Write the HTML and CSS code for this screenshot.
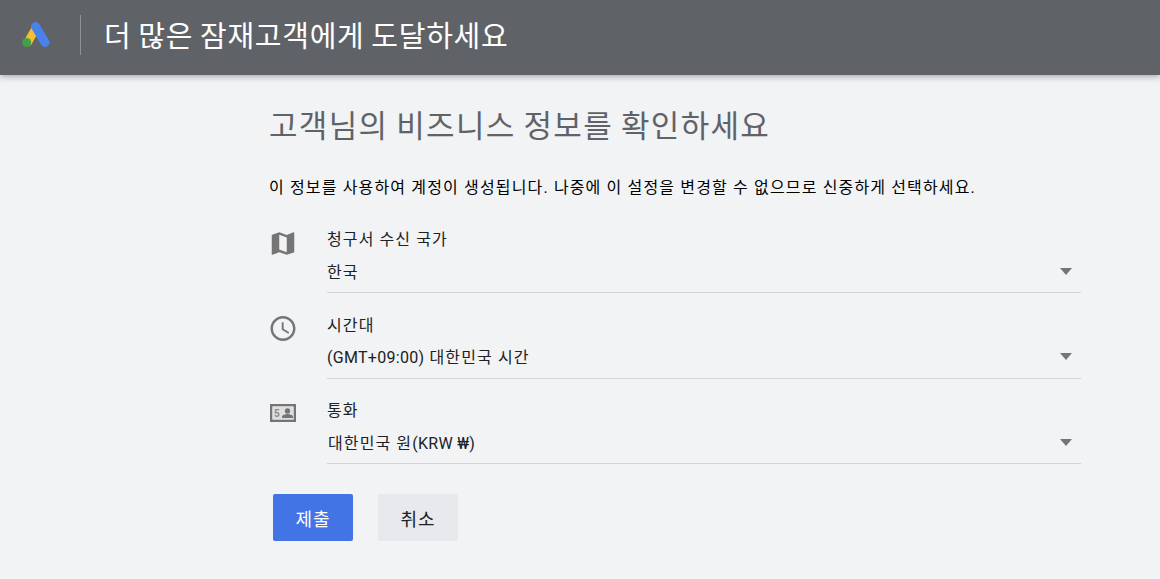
FILE: index.html
```html
<!DOCTYPE html>
<html lang="ko">
<head>
<meta charset="utf-8">
<title>Google Ads</title>
<link rel="stylesheet" href="styles.css">
</head>
<body>
<header class="topbar">
  <svg class="logo" width="28" height="26" viewBox="0 0 28 26">
    <path d="M6 20 14 6" stroke="#f4c02f" stroke-width="8.5" stroke-linecap="round" fill="none"/>
    <path d="M13.5 4.5 23 20.5" stroke="#4a82ec" stroke-width="9" stroke-linecap="round" fill="none"/>
    <circle cx="4.7" cy="20.5" r="4.5" fill="#43a047"/>
  </svg>
  <div class="divider"></div>
  <h1 class="topbar-title">더 많은 잠재고객에게 도달하세요</h1>
</header>
<main class="content">
  <h2 class="heading">고객님의 비즈니스 정보를 확인하세요</h2>
  <p class="intro">이 정보를 사용하여 계정이 생성됩니다. 나중에 이 설정을 변경할 수 없으므로 신중하게 선택하세요.</p>
  <div class="fields">
    <div class="field">
      <div class="icon-slot"><svg width="31" height="31" viewBox="0 0 24 24"><path fill="#757575" d="M20.5 3l-.16.03L15 5.1 9 3 3.36 4.9c-.21.07-.36.25-.36.48V20.5c0 .28.22.5.5.5l.16-.03L9 18.9l6 2.1 5.64-1.9c.21-.07.36-.25.36-.48V3.5c0-.28-.22-.5-.5-.5zM15 19l-6-2.11V5l6 2.11V19z"/></svg></div>
      <div class="field-body">
        <div class="label">청구서 수신 국가</div>
        <div class="select"><span>한국</span><i class="arrow"></i></div>
      </div>
    </div>
    <div class="field">
      <div class="icon-slot"><svg width="31" height="31" viewBox="0 0 24 24"><path fill="#757575" d="M11.99 2C6.47 2 2 6.48 2 12s4.47 10 9.99 10C17.52 22 22 17.52 22 12S17.52 2 11.99 2zM12 20c-4.42 0-8-3.58-8-8s3.58-8 8-8 8 3.58 8 8-3.58 8-8 8zm.5-13H11v6l5.25 3.15.75-1.23-4.5-2.67z"/></svg></div>
      <div class="field-body">
        <div class="label">시간대</div>
        <div class="select"><span class="value-up"><span class="latin">(GMT+09:00)</span> 대한민국 시간</span><i class="arrow"></i></div>
      </div>
    </div>
    <div class="field">
      <div class="icon-slot icon-slot-card"><svg width="26" height="18" viewBox="0 0 26 18"><path fill="#757575" fill-rule="evenodd" d="M0 0h26v18H0zM2.5 2.5v13h21v-13z"/><rect x="2.5" y="2.5" width="21" height="13" fill="#dfe0e2"/><circle cx="17.5" cy="7" r="2.7" fill="#757575"/><path fill="#757575" d="M12 14v-1.5c0-1.6 3.6-2.6 5.5-2.6s5.5 1 5.5 2.6V14z"/><text x="4" y="12.5" font-size="10" font-weight="700" font-family="Roboto, sans-serif" fill="#8a8a8a">5</text></svg></div>
      <div class="field-body">
        <div class="label">통화</div>
        <div class="select"><span class="value-shift">대한민국 원<span class="latin">(KRW ₩)</span></span><i class="arrow"></i></div>
      </div>
    </div>
  </div>
  <div class="actions">
    <button class="btn btn-primary" type="button">제출</button>
    <button class="btn btn-secondary" type="button">취소</button>
  </div>
</main>
</body>
</html>
```
FILE: styles.css
```css
* { box-sizing: border-box; }
html, body { margin: 0; padding: 0; height: 100%; overflow: hidden; }
body {
  background: #f1f3f5;
  font-family: Roboto, "Noto Sans CJK KR", sans-serif;
  color: #202124;
}
.topbar {
  height: 75px;
  background: #5f6368;
  display: flex;
  align-items: center;
  padding-left: 22px;
  box-shadow: 0 2px 6px rgba(0,0,0,.3);
}
.logo { flex: none; margin-top: -5px; }
.divider { width: 1px; height: 40px; background: #8e9195; margin: 0 0 5px 30px; }
.topbar-title { margin: 0 0 2px 23px; font-size: 29px; font-weight: 400; letter-spacing: .72px; word-spacing: -1px; color: #fff; line-height: 30px; }
.content { width: 812px; margin-left: 269px; padding-top: 1px; }
.heading { margin: 31px 0 0; font-size: 31px; font-weight: 400; letter-spacing: 1.3px; word-spacing: -1px; line-height: 40px; color: #5f6368; }
.intro { margin: 31px 0 0; font-size: 16px; letter-spacing: 1.15px; line-height: 20px; color: #000; }
.fields { margin-top: 27px; }
.field { display: flex; height: 85.5px; }
.icon-slot { flex: none; width: 30px; height: 30px; margin: 3px 0 0 -1px; display: flex; align-items: center; justify-content: center; }
.icon-slot-card { margin-top: 2px; }
.field-body { flex: 1; display: flex; flex-direction: column; margin-left: 29px; }
.label { font-size: 16px; letter-spacing: 1.1px; line-height: 20px; margin-top: 5px; }
.select { height: 43px; border-bottom: 1px solid #d2d4d6; display: flex; align-items: center; justify-content: space-between; font-size: 16px; letter-spacing: 1.1px; padding-right: 9px; }
.value-up { margin-bottom: 2px; }
.value-shift { margin-left: 1px; }
.latin { letter-spacing: .3px; }
.arrow { width: 0; height: 0; border-left: 6px solid transparent; border-right: 6px solid transparent; border-top: 7px solid #757575; }
.actions { display: flex; gap: 25px; margin-top: 12.5px; padding-left: 4px; }
.btn { width: 80px; height: 47px; border: 0; border-radius: 2px; font: inherit; font-size: 18px; letter-spacing: .9px; }
.btn-primary { background: #4274e6; color: #fff; }
.btn-secondary { background: #e8e9ed; color: #202124; }
```
